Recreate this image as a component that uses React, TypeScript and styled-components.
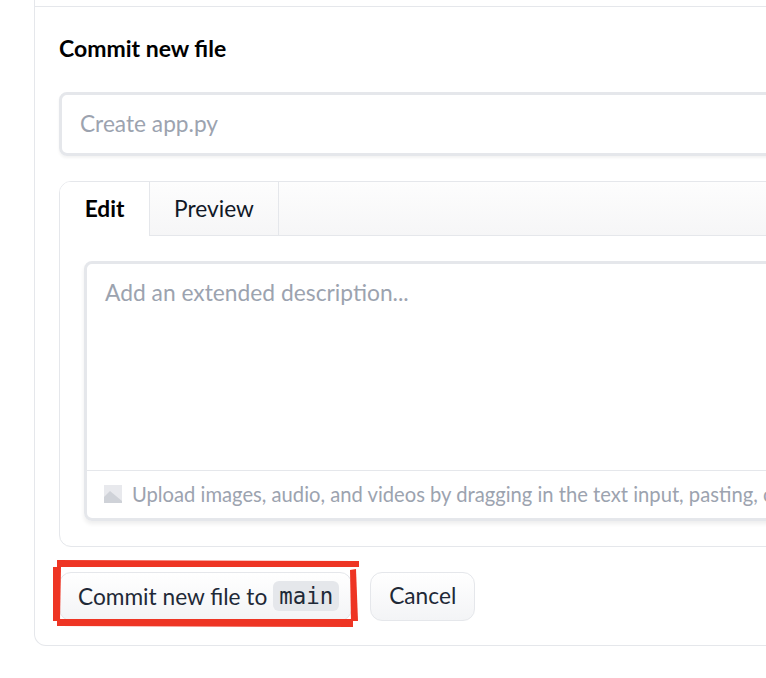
import React from 'react';
import styled, { createGlobalStyle } from 'styled-components';

const GlobalStyle = createGlobalStyle`
  html, body {
    margin: 0;
    padding: 0;
    background: #fff;
    overflow: hidden;
  }
  body {
    width: 766px;
    height: 678px;
    font-family: 'Lato', 'Noto Sans', sans-serif;
  }
`;

const Page = styled.div`
  width: 766px;
  height: 678px;
  overflow: hidden;
  padding-left: 34px;
  box-sizing: border-box;
`;

const Card = styled.form`
  width: 900px;
  height: 646px;
  box-sizing: border-box;
  border: 1px solid #e5e7eb;
  border-top: none;
  border-radius: 0 0 12px 12px;
  display: flex;
  flex-direction: column;
`;

const TopLine = styled.div`
  height: 6px;
  border-bottom: 1px solid #e5e7eb;
`;

const Body = styled.div`
  padding: 26px 24px 0;
  display: flex;
  flex-direction: column;
`;

const Title = styled.h2`
  margin: 0 0 29px;
  height: 30px;
  line-height: 30px;
  font-size: 23px;
  font-weight: 700;
  color: #000;
`;

const TitleInput = styled.div`
  height: 64px;
  box-sizing: border-box;
  border: 3px solid #e5e7eb;
  border-radius: 8px;
  padding: 0 18px 2px;
  display: flex;
  align-items: center;
  font-size: 22.7px;
  color: #9ca3af;
  box-shadow: 0 2px 3px rgba(0, 0, 0, 0.05);
`;

const TabBox = styled.div`
  margin-top: 25px;
  height: 366px;
  box-sizing: border-box;
  border: 1px solid #e5e7eb;
  border-radius: 12px;
  display: flex;
  flex-direction: column;
  overflow: hidden;
`;

const TabBar = styled.div`
  height: 53px;
  flex: none;
  display: flex;
  background: linear-gradient(to bottom, #fdfdfd, #f6f6f7);
  border-bottom: 1px solid #e5e7eb;
`;

const Tab = styled.div<{ $active?: boolean }>`
  width: ${(p) => (p.$active ? '90px' : '129px')};
  padding-bottom: 1px;
  display: flex;
  align-items: center;
  justify-content: center;
  box-sizing: border-box;
  border-right: 1px solid #e5e7eb;
  font-size: 22.7px;
  font-weight: ${(p) => (p.$active ? 700 : 400)};
  color: ${(p) => (p.$active ? '#000' : '#111827')};
  background: ${(p) => (p.$active ? '#fff' : 'transparent')};
  margin-bottom: ${(p) => (p.$active ? '-1px' : '0')};
`;

const TabPanel = styled.div`
  padding: 25px 24px 0;
`;

const Editor = styled.div`
  height: 260px;
  box-sizing: border-box;
  border: 3px solid #e5e7eb;
  border-radius: 8px;
  display: flex;
  flex-direction: column;
  box-shadow: 0 3px 4px rgba(0, 0, 0, 0.07);
`;

const EditorText = styled.div`
  height: 206px;
  flex: none;
  box-sizing: border-box;
  padding: 15px 18px 0;
  line-height: 26px;
  font-size: 22.8px;
  color: #9ca3af;
`;

const Hint = styled.div`
  flex: 1;
  border-top: 1px solid #e5e7eb;
  padding: 0 0 2px 17px;
  display: flex;
  align-items: center;
  gap: 10px;
  font-size: 20.2px;
  color: #9ca3af;
  white-space: nowrap;
`;

const HintIcon = styled.svg`
  flex: none;
`;

const Actions = styled.div`
  position: relative;
  margin-top: 25px;
  display: flex;
  gap: 18px;
`;

const Button = styled.button`
  height: 49px;
  padding: 0 18px 3px;
  box-sizing: border-box;
  border: 1px solid #e5e7eb;
  border-radius: 12px;
  background: linear-gradient(to bottom, #fff, #f3f4f6);
  display: flex;
  align-items: center;
  gap: 6px;
  font-family: inherit;
  font-size: 22.7px;
  color: #1f2937;
`;

const CommitButton = styled(Button)`
  padding: 0 12px 1px 18px;
`;

const Code = styled.code`
  font-family: 'DejaVu Sans Mono', 'Liberation Mono', monospace;
  font-size: 22.4px;
  background: #e5e7eb;
  border-radius: 6px;
  padding: 0 6px;
  height: 30px;
  line-height: 30px;
`;

const Annotation = styled.svg`
  position: absolute;
  left: -6px;
  top: -14px;
  pointer-events: none;
`;

const ImageIcon = () => (
  <HintIcon width="18" height="18" viewBox="0 0 18 18">
    <rect width="18" height="18" fill="#e8e9ed" />
    <path d="M0 18 L0 12 L6 6 L18 16 L18 18 Z" fill="#cfd2d8" />
  </HintIcon>
);

export default function App() {
  return (
    <Page>
      <GlobalStyle />
      <Card>
        <TopLine />
        <Body>
          <Title>Commit new file</Title>
          <TitleInput>Create app.py</TitleInput>
          <TabBox>
            <TabBar>
              <Tab $active>Edit</Tab>
              <Tab>Preview</Tab>
            </TabBar>
            <TabPanel>
              <Editor>
                <EditorText>Add an extended description...</EditorText>
                <Hint>
                  <ImageIcon />
                  Upload images, audio, and videos by dragging in the text input, pasting, or clicking here.
                </Hint>
              </Editor>
            </TabPanel>
          </TabBox>
          <Actions>
            <CommitButton type="button">
              Commit new file to <Code>main</Code>
            </CommitButton>
            <Button type="button">Cancel</Button>
            <Annotation width="320" height="80" viewBox="0 0 320 80">
              <path d="M4 2 L306 3 L306 9 L4 9 Z" fill="#ee3524" />
              <path d="M0 9 L8 9 L7 63 L0 63 Z" fill="#ee3524" />
              <path d="M297 12 L303 11 L305 63 L298 63 Z" fill="#ee3524" />
              <path d="M4 61 L300 61 L300 69 L4 68 Z" fill="#ee3524" />
            </Annotation>
          </Actions>
        </Body>
      </Card>
    </Page>
  );
}
